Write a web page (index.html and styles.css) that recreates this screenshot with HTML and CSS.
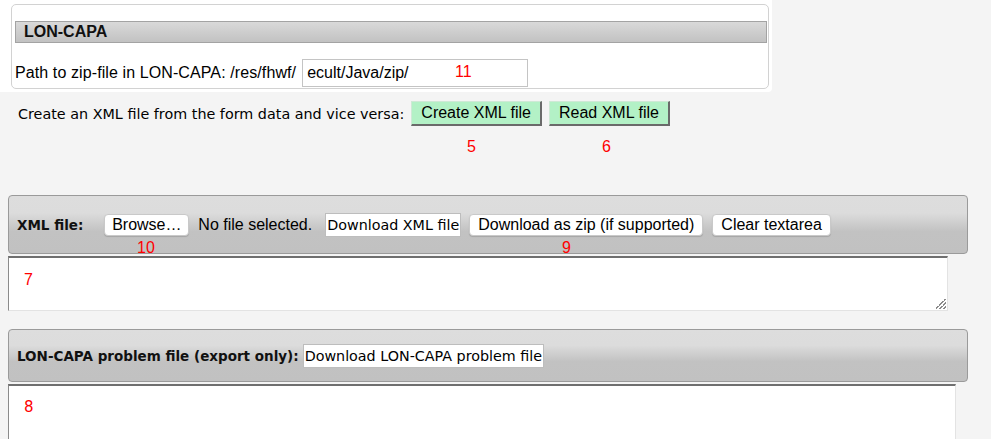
FILE: index.html
```html
<!DOCTYPE html>
<html>
<head>
<meta charset="utf-8">
<link rel="stylesheet" href="styles.css">
</head>
<body>
<div class="page">
  <div class="top">
    <div class="fieldset">
      <div class="bar">LON-CAPA</div>
      <div class="path-row">
        <span class="path-label">Path to zip-file in LON-CAPA: /res/fhwf/</span>
        <input class="path-input" type="text" value="ecult/Java/zip/">
      </div>
    </div>
  </div>

  <div class="xml-row">
    <span class="tahoma">Create an XML file from the form data and vice versa:</span>
    <button class="btn-green">Create XML file</button>
    <button class="btn-green">Read XML file</button>
  </div>

  <div class="panel panel-xml">
    <span class="panel-label">XML file:</span>
    <button class="btn-mac btn-browse">Browse…</button>
    <span class="nofile">No file selected.</span>
    <button class="btn-plain">Download XML file</button>
    <button class="btn-mac">Download as zip (if supported)</button>
    <button class="btn-mac">Clear textarea</button>
  </div>
  <div class="ta ta-xml"><span class="grip"></span></div>

  <div class="panel panel-lon">
    <span class="panel-label">LON-CAPA problem file (export only):</span>
    <button class="btn-plain btn-lon">Download LON-CAPA problem file</button>
  </div>
  <div class="ta ta-lon"></div>

  <span class="num n11">11</span>
  <span class="num n5">5</span>
  <span class="num n6">6</span>
  <span class="num n10">10</span>
  <span class="num n9">9</span>
  <span class="num n7">7</span>
  <span class="num n8">8</span>
</div>
</body>
</html>
```
FILE: styles.css
```css
html, body {
  margin: 0;
  padding: 0;
  background: #f4f4f4;
  overflow: hidden;
}
body {
  font-family: "Liberation Sans", Arial, sans-serif;
  font-size: 16px;
  color: #000;
}
.page {
  position: relative;
  height: 439px;
  overflow: hidden;
}
.top {
  width: 758px;
  background: #fff;
  padding: 4px 3px 3px 11px;
  border-bottom-right-radius: 4px;
}
.fieldset {
  border: 1px solid #d2d2d2;
  border-radius: 5px;
  padding: 16px 1px 1px 3px;
}
.bar {
  height: 20px;
  border: 1px solid #a3a3a3;
  background: linear-gradient(#d9d9d9, #c2c2c2);
  font-weight: bold;
  font-size: 16px;
  line-height: 20px;
  padding-left: 8px;
  color: #111;
}
.path-row {
  display: flex;
  align-items: center;
  margin-top: 16px;
}
.path-label {
  white-space: nowrap;
  letter-spacing: 0.1px;
}
.path-input {
  margin-left: 6px;
  width: 226px;
  height: 28px;
  box-sizing: border-box;
  border: 1px solid #c4c4c4;
  padding: 0 0 0 4px;
  font-family: "Liberation Sans", Arial, sans-serif;
  font-size: 16px;
  color: #000;
  background: #fff;
}
.tahoma {
  font-family: "DejaVu Sans", Verdana, sans-serif;
  font-size: 14.35px;
}
.xml-row {
  display: flex;
  align-items: center;
  margin: 9px 0 0 18px;
  height: 25px;
}
.btn-green {
  font-family: "Liberation Sans", Arial, sans-serif;
  font-size: 16px;
  height: 25px;
  padding: 0 9px;
  background: #b3f1c6;
  border: none;
  border-right: 2px solid #6a6a6a;
  border-bottom: 2px solid #6a6a6a;
  border-top: 1px solid #cfe9d6;
  border-left: 1px solid #cfe9d6;
  color: #000;
  margin-left: 7px;
}
.panel {
  display: flex;
  align-items: center;
  margin-left: 8px;
  border: 1px solid #9a9a9a;
  border-radius: 4px;
  background: linear-gradient(#dddddd 0%, #dcdcdc 30%, #c2c2c2 62%, #c1c1c1 100%);
  padding: 0 8px;
  box-sizing: border-box;
  width: 960px;
}
.panel-xml {
  margin-top: 69px;
  height: 59px;
}
.panel-lon {
  margin-top: 18px;
  height: 53px;
}
.panel-label {
  font-family: "DejaVu Sans", Verdana, sans-serif;
  font-weight: bold;
  font-size: 13.5px;
  color: #111;
  white-space: nowrap;
}
.panel-xml .panel-label {
  margin-right: 21px;
}
.panel-lon .panel-label {
  margin-right: 4px;
}
.btn-mac {
  font-family: "Liberation Sans", Arial, sans-serif;
  font-size: 16px;
  height: 22px;
  background: #fff;
  border: 1px solid #c9c9c9;
  border-radius: 4px;
  box-shadow: 0 1px 1px rgba(0,0,0,0.15);
  padding: 0 8px;
  color: #000;
  margin-right: 9px;
}
.btn-browse {
  width: 85px;
  padding: 0;
}
.nofile {
  margin-right: 13px;
  white-space: nowrap;
}
.btn-plain {
  font-family: "DejaVu Sans", Verdana, sans-serif;
  font-size: 14.3px;
  height: 24px;
  background: #fff;
  border: 1px solid #bdbdbd;
  padding: 0 1px;
  color: #000;
  margin-right: 8px;
}
.ta {
  position: relative;
  margin-left: 8px;
  margin-top: 2px;
  background: #fff;
  border-top: 2px solid #6f6f6f;
  border-left: 1px solid #8a8a8a;
  border-right: 1px solid #e3e3e3;
  border-bottom: 1px solid #e3e3e3;
  box-sizing: border-box;
}
.ta-xml {
  width: 940px;
  height: 55px;
}
.ta-lon {
  width: 948px;
  height: 55px;
  border-bottom: none;
}
.grip {
  position: absolute;
  right: 1px;
  bottom: 1px;
  width: 10px;
  height: 10px;
  background: linear-gradient(135deg, transparent 0 45%, #8a8a8a 45% 52%, transparent 52% 65%, #8a8a8a 65% 72%, transparent 72% 85%, #8a8a8a 85% 92%, transparent 92%);
}
.num {
  position: absolute;
  color: #f00;
  font-family: "Liberation Sans", Arial, sans-serif;
  font-size: 16px;
  line-height: 16px;
}
.n11 { left: 455px; top: 64px; }
.n5 { left: 467px; top: 139px; }
.n6 { left: 602px; top: 139px; }
.n10 { left: 137px; top: 240px; }
.n9 { left: 562px; top: 240px; }
.n7 { left: 24px; top: 272px; }
.n8 { left: 24px; top: 399px; font-family: "DejaVu Sans", Verdana, sans-serif; font-size: 15px; }
```
